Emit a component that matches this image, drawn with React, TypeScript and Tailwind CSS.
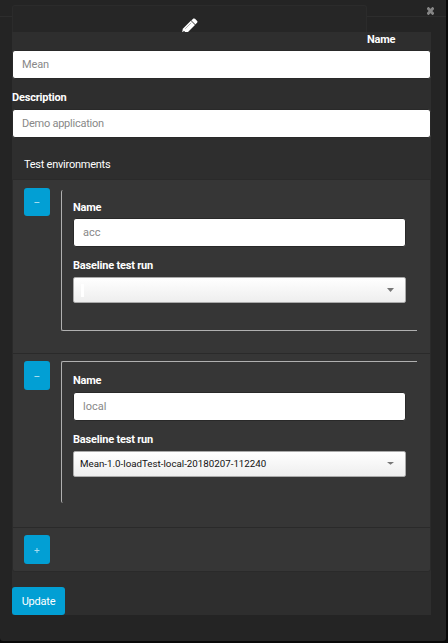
import React from "react";

function Caret({ flat }: { flat?: boolean }) {
  return (
    <svg className="mr-[11px] h-1 w-[7px]" viewBox="0 0 7 4">
      <path d={flat ? "M0 0H7L3.5 2.7Z" : "M0 0H7L3.5 4Z"} fill="#777" />
    </svg>
  );
}

function Label({ children, className = "" }: { children: React.ReactNode; className?: string }) {
  return (
    <label className={`block h-4 text-[11px] leading-4 font-bold tracking-[-0.19px] text-white ${className}`}>
      {children}
    </label>
  );
}

function Field({ value, className = "" }: { value: string; className?: string }) {
  return (
    <input
      readOnly
      value={value}
      className={`block h-[29px] w-full rounded-[3px] border border-[#292929] bg-white px-[9px] text-[11px] leading-4 text-[#888] outline-none ${className}`}
    />
  );
}

function SmallButton({ plus, tall }: { plus?: boolean; tall?: boolean }) {
  return (
    <button className="flex w-[26px] shrink-0 items-center justify-center self-start rounded-[3px] bg-[#029fd4]">
      <svg className={tall ? "h-[29px] w-[26px]" : "h-7 w-[26px]"} viewBox={tall ? "0 0 26 29" : "0 0 26 28"}>
        <path
          d={plus ? "M10.5 15.5H15.5M13 13V18" : tall ? "M10.5 15.5H15.5" : "M10.5 14.5H15.5"}
          stroke="#a5dcef"
          strokeWidth="1"
        />
      </svg>
    </button>
  );
}

function Select({ value, flat }: { value?: string; flat?: boolean }) {
  return (
    <div className="flex h-[26px] items-center justify-between rounded-[2px] border border-[#aaa] bg-gradient-to-b from-white to-[#eee] pl-1.5 text-[9.75px] text-[#111]">
      {value ? (
        <span className="whitespace-nowrap">{value}</span>
      ) : (
        <span className="ml-px h-[13px] w-[3px] bg-white" />
      )}
      <Caret flat={flat} />
    </div>
  );
}

export default function App() {
  return (
    <div className="h-[643px] w-[448px] overflow-hidden bg-[#090909] font-['Roboto',sans-serif] text-[11px] text-white">
      <div className="flex h-[641px] w-[446px] flex-col rounded-br-[3px] rounded-bl-[3px] bg-[#242424]">
        <header className="flex h-8 shrink-0">
          <div className="h-[17px] w-3 border-b border-[#2d2d2d]" />
          <div className="mt-[5px] flex h-[27px] w-[355px] items-end justify-center overflow-hidden rounded-t-[3px] border border-b-0 border-[#2b2b2b] bg-[#262626]">
            <svg className="mb-[-2px] h-4 w-4" viewBox="0 0 16 16">
              <path d="M0 15.5L.8 10.8L8.8 2.8L13 7L5 15Z" fill="#fff" />
              <path d="M9.3 2.4L11.4 .6Q12.2 .1 13 .8L15.2 3Q15.8 3.8 15.2 4.5L13.4 6.5Z" fill="#fff" />
              <path d="M3.2 10.8L9.3 4.7" stroke="#999" strokeWidth=".8" />
              <path d="M9.6 3L13 6.4" stroke="#888" strokeWidth=".7" />
              <path d="M1.5 13.2L2.8 14.5" stroke="#262626" strokeWidth="1.3" />
            </svg>
          </div>
          <div className="flex h-[17px] flex-1 justify-end border-b border-[#2d2d2d] pr-[12px]">
            <svg className="mt-[7px] h-2 w-[7px]" viewBox="0 0 7 8">
              <path d="M.5 .6L6.5 7.4M6.5 .6L.5 7.4" stroke="#858585" strokeWidth="2.8" />
            </svg>
          </div>
        </header>

        <main className="ml-3 h-[583px] w-[419px] bg-[#2e2e2e]">
          <Label className="mb-[2px] pl-[355px]">Name</Label>
          <Field value="Mean" className="tracking-[-0.1px]" />
          <Label className="mt-[10px] mb-1 pt-px">Description</Label>
          <Field value="Demo application" className="tracking-[-0.25px]" />

          <section className="mt-[18px] h-[417px]">
            <h2 className="h-[23px] pt-px pl-3 text-[11px] leading-4 font-normal tracking-[-0.25px]">
              Test environments
            </h2>
            <div className="h-[393px] rounded-b-[3px] border border-[#2a2a2a] bg-[#363636]">
              <div className="flex h-[174px] border-b border-[#2a2a2a] pt-2 pl-[11px]">
                <SmallButton />
                <div className="mt-[2px] ml-[11px] h-[141px] w-[356px] rounded-l-[2px] border-b border-l border-[#b0b0b0] pr-[11px] pl-[11px]">
                  <Label className="mt-[9px] mb-[3px] pt-px">Name</Label>
                  <Field value="acc" />
                  <Label className="mt-[10px] mb-1 pt-px">Baseline test run</Label>
                  <Select />
                </div>
              </div>
              <div className="flex h-[174px] border-b border-[#2a2a2a] pt-[7px] pl-[11px]">
                <SmallButton tall />
                <div className="ml-[11px] h-[142px] w-[356px] rounded-l-[2px] border-t border-l border-[#b0b0b0] pr-[11px] pl-[11px]">
                  <Label className="mt-[10px] mb-[4px] pt-px">Name</Label>
                  <Field value="local" />
                  <Label className="mt-[10px] mb-1 pt-px">Baseline test run</Label>
                  <Select value="Mean-1.0-loadTest-local-20180207-112240" flat />
                </div>
              </div>
              <div className="flex pt-[7px] pl-[11px]">
                <SmallButton plus tall />
              </div>
            </div>
          </section>
          <button className="mt-[14px] block h-7 w-[53px] rounded-[3px] bg-[#029fd4] pt-[2px] text-[11px] tracking-[-0.2px] text-white">
            Update
          </button>
        </main>
      </div>
    </div>
  );
}
